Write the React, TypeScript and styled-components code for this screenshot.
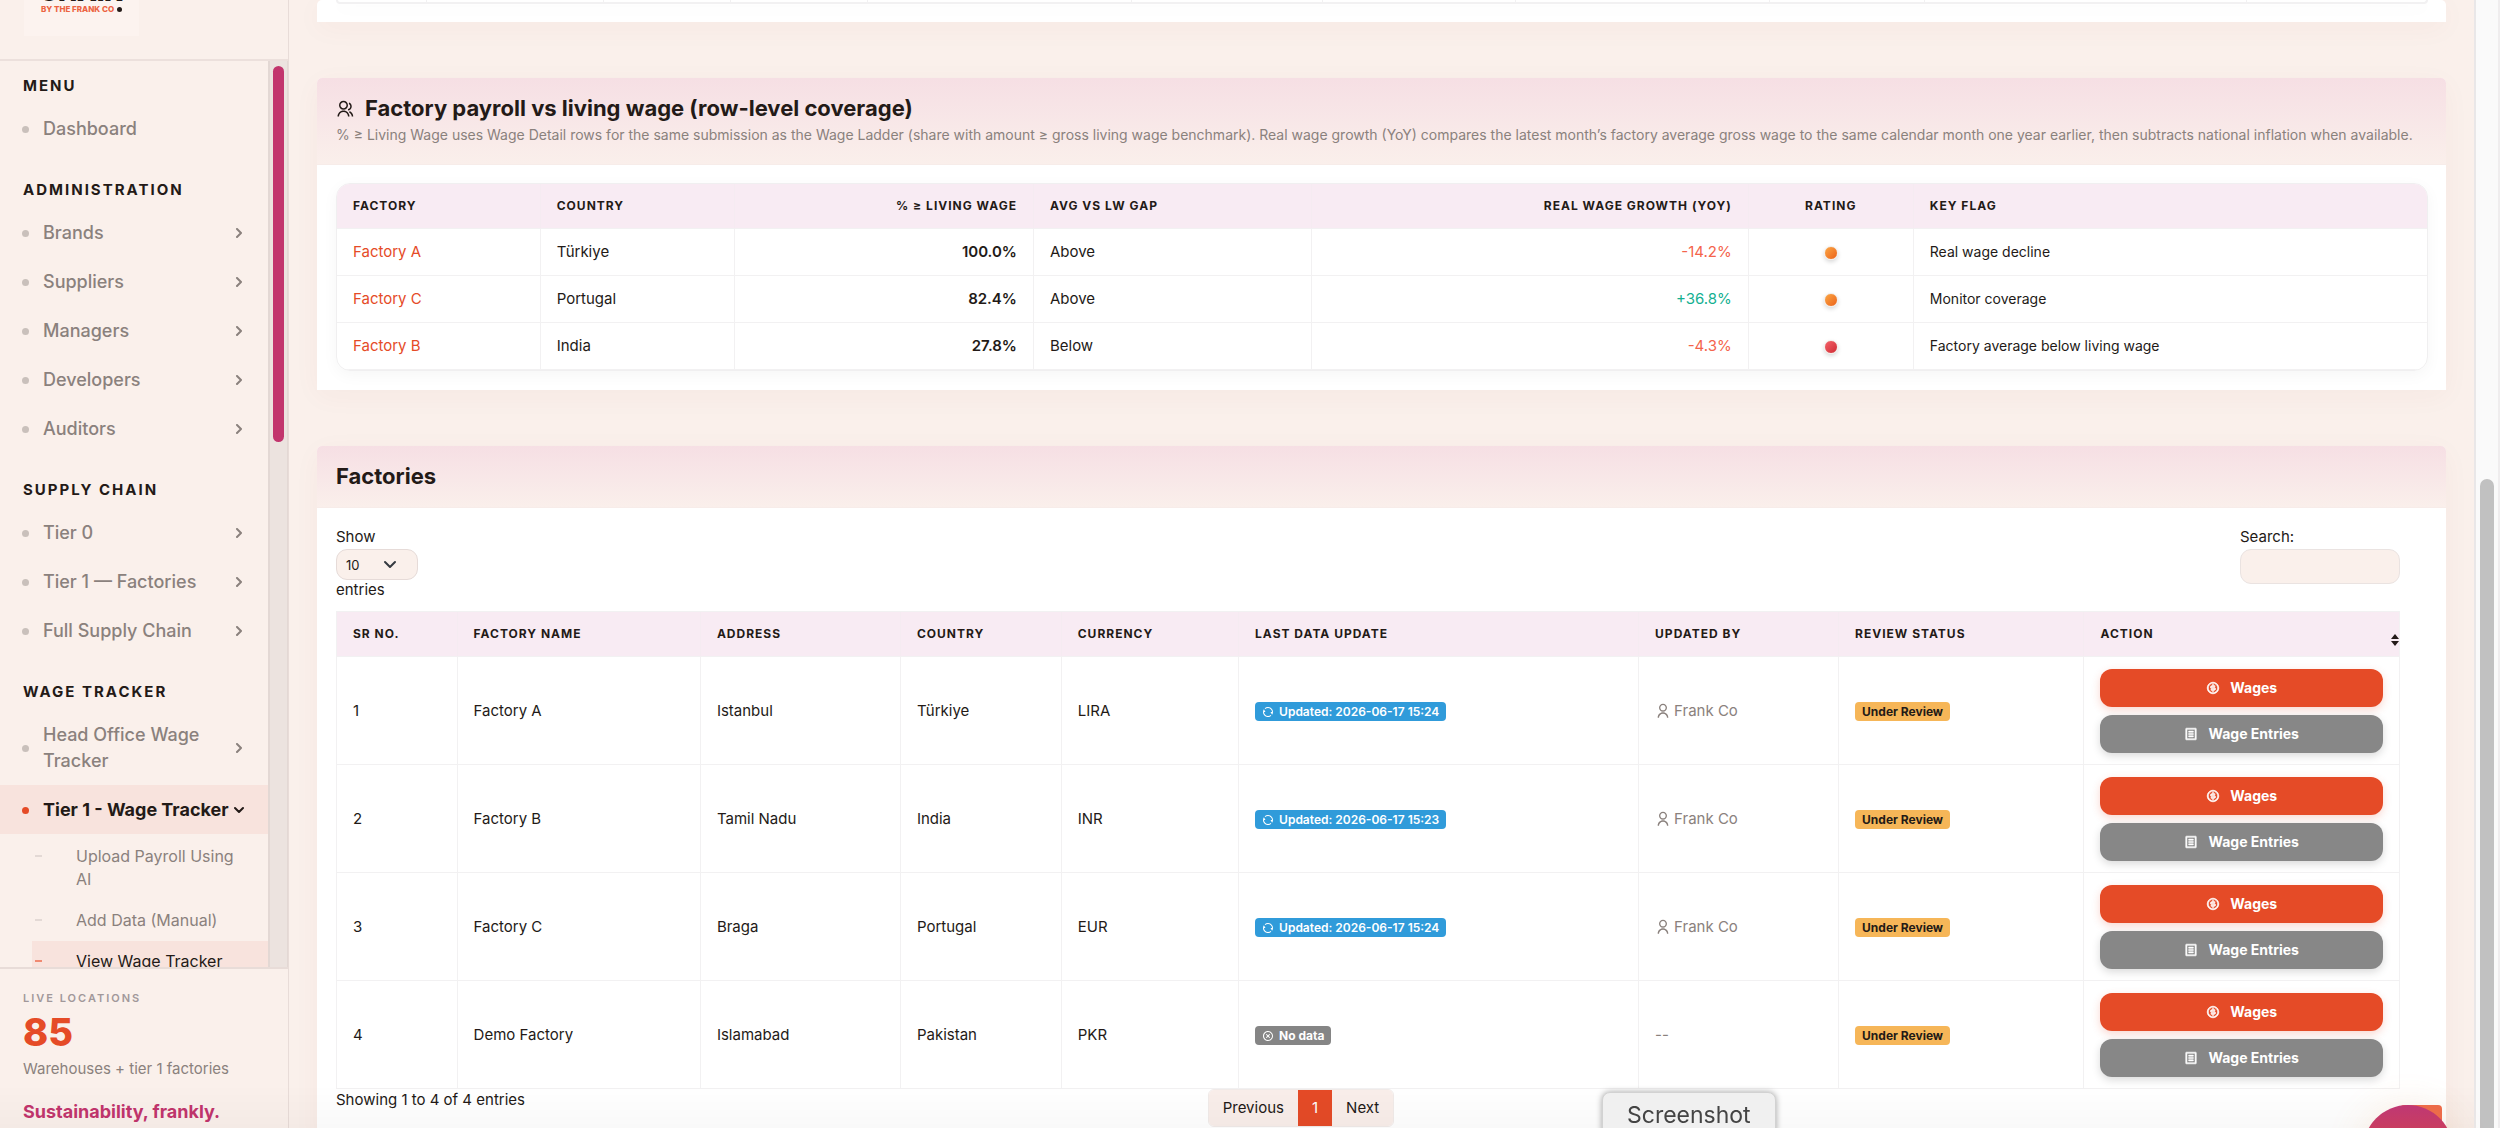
import React from 'react';
import styled, { createGlobalStyle, css } from 'styled-components';
import {
  RiGroupLine,
  RiUserLine,
  RiRefreshLine,
  RiCloseCircleLine,
  RiMoneyDollarCircleLine,
  RiFileListLine,
} from 'react-icons/ri';

const color = {
  page: '#faf0eb',
  ink: '#231a17',
  muted: '#8a817d',
  orange: '#e54b27',
  pink: '#c2356d',
  line: '#f2f1f2',
  head: '#f8ebf3',
  grey: '#878787',
};

const GlobalStyle = createGlobalStyle`
  *, *::before, *::after { box-sizing: border-box; }
  body {
    margin: 0;
    background: ${color.page};
    color: ${color.ink};
    font-family: Inter, "Noto Sans", sans-serif;
    font-size: 15px;
    line-height: 24px;
  }
  a { color: inherit; text-decoration: none; }
  h2, p, ul { margin: 0; padding: 0; }
  ul { list-style: none; }
  button, select, input { font: inherit; color: inherit; }
`;

const Shell = styled.div`
  display: flex;
  height: 100vh;
  overflow: hidden;
`;

/* Sidebar */

const Sidebar = styled.aside`
  display: flex;
  flex-direction: column;
  flex: 0 0 289px;
  border-right: 1px solid #e8dcd8;
`;

const LogoBar = styled.div`
  flex: 0 0 61px;
  padding-left: 24px;
  border-bottom: 2px solid #ece0dc;
`;

const LogoCard = styled.div`
  display: flex;
  flex-direction: column;
  align-items: center;
  width: 115px;
  height: 36px;
  background: #fcf3ef;
`;

const LogoName = styled.div`
  margin-top: -18px;
  font-size: 25px;
  font-weight: 900;
  line-height: 20px;
`;

const LogoBy = styled.div`
  display: flex;
  align-items: center;
  gap: 3px;
  margin-top: 2px;
  color: #ec6443;
  font-size: 8px;
  font-weight: 800;
  line-height: 10px;
  white-space: nowrap;

  &::after {
    content: '';
    width: 5px;
    height: 5px;
    border-radius: 50%;
    background: ${color.ink};
  }
`;

const NavArea = styled.div`
  display: flex;
  flex: 1;
  min-height: 0;
`;

const Nav = styled.nav`
  flex: 1;
  min-width: 0;
  overflow: hidden;
`;

const NavTrack = styled.div`
  flex: 0 0 19px;
  padding: 5px 3px;
  border-left: 2px solid #e3d8d4;
  border-right: 1px solid #e3d8d4;
  background: #ece3df;
`;

const NavThumb = styled.div`
  width: 11px;
  height: 42%;
  border-radius: 6px;
  background: ${color.pink};
`;

const NavHeading = styled.h2<{ $first?: boolean }>`
  padding: ${(p) => (p.$first ? '15px' : '27px')} 23px 8px;
  font-size: 15px;
  font-weight: 700;
  letter-spacing: 2px;
  line-height: 20px;
  text-transform: uppercase;
`;

const NavLink = styled.a<{ $active?: boolean }>`
  display: flex;
  align-items: center;
  padding: 12px 24px 11px 22px;
  color: ${color.muted};
  font-size: 18px;
  font-weight: 500;
  line-height: 26px;

  &::before {
    content: '';
    flex: none;
    width: 7px;
    height: 7px;
    margin-right: 14px;
    border-radius: 50%;
    background: #c9c0bb;
  }

  ${(p) =>
    p.$active &&
    css`
      background: #f8e3dd;
      color: ${color.ink};
      font-weight: 700;
      &::before { background: ${color.orange}; }
    `}
`;

const NavText = styled.span`
  flex: 1;
  min-width: 0;
`;

const SubList = styled.ul`
  padding: 2px 0 0 32px;
`;

const SubLink = styled.a<{ $active?: boolean }>`
  display: flex;
  padding: 9px 24px 9px 3px;
  color: ${color.muted};
  font-size: 16px;
  line-height: 23px;

  &::before {
    content: '';
    flex: none;
    width: 7px;
    height: 2px;
    margin: 10px 34px 0 0;
    background: #e3d9d5;
  }

  ${(p) =>
    p.$active &&
    css`
      background: #f8e3dd;
      color: ${color.ink};
      &::before { background: #f08a72; }
    `}
`;

const SideFooter = styled.div`
  flex: 0 0 161px;
  padding: 21px 23px 0;
  border-top: 2px solid #e8dcd8;
  white-space: nowrap;
`;

const FooterLabel = styled.p`
  color: #a1989a;
  font-size: 11px;
  font-weight: 600;
  letter-spacing: 2px;
  line-height: 16px;
`;

const FooterCount = styled.p`
  color: ${color.orange};
  font-size: 38px;
  font-weight: 800;
  line-height: 52px;
`;

const FooterNote = styled.p`
  color: ${color.muted};
  font-size: 15px;
  line-height: 22px;
`;

const FooterTag = styled.p`
  margin-top: 19px;
  color: ${color.pink};
  font-size: 18px;
  font-weight: 700;
  line-height: 26px;
`;

/* Content */

const Main = styled.main`
  display: flex;
  flex: 1;
  flex-direction: column;
  gap: 56px;
  min-width: 0;
  padding: 0 28px;
  overflow: hidden;
`;

const Card = styled.section`
  flex: none;
  border-radius: 5px 5px 0 0;
  background: #fff;
  box-shadow: 0 6px 28px rgba(150, 60, 50, 0.04);
`;

const CardHeader = styled.header<{ $tall?: boolean }>`
  padding: ${(p) => (p.$tall ? '15px 19px 18px' : '15px 19px 15px')};
  border-bottom: 1px solid #f7ece9;
  border-radius: 5px 5px 0 0;
  background: linear-gradient(#f6dfe4, #faefeb);
`;

const CardTitle = styled.h2`
  display: flex;
  align-items: center;
  gap: 11px;
  font-size: 22px;
  font-weight: 700;
  line-height: 31px;
`;

const CardNote = styled.p`
  color: ${color.muted};
  font-size: 14px;
  line-height: 22px;
`;

const CardBody = styled.div`
  padding: 18px 18px 19px 19px;
`;

const TailBody = styled.div`
  padding: 0 18px 18px 19px;
`;

const TailRow = styled.div`
  display: flex;
  height: 4px;
  border: solid ${color.line};
  border-width: 0 2px 2px;
  border-radius: 0 0 12px 12px;
  box-shadow: 0 4px 16px rgba(0, 0, 0, 0.04);
`;

const TailCell = styled.div<{ $grow: number }>`
  flex: ${(p) => p.$grow} 0 0;
  & + & { border-left: 1px solid ${color.line}; }
`;

const RoundedFrame = styled.div`
  overflow: hidden;
  border: 1px solid #f0eff0;
  border-radius: 14px;
  box-shadow: 0 4px 16px rgba(0, 0, 0, 0.04);
`;

const Table = styled.table<{ $boxed?: boolean }>`
  width: 100%;
  table-layout: fixed;
  border-collapse: separate;
  border-spacing: 0;
  ${(p) => p.$boxed && css`border: solid ${color.line}; border-width: 1px 1px 0;`}
`;

type Align = 'left' | 'right' | 'center';

const Th = styled.th<{ $align?: Align }>`
  height: 45px;
  padding: 12px 16px 12px;
  background: ${color.head};
  border-bottom: 1px solid ${color.line};
  font-size: 12px;
  font-weight: 700;
  letter-spacing: 1px;
  line-height: 20px;
  text-align: ${(p) => p.$align || 'left'};
  text-transform: uppercase;
  white-space: nowrap;

  & + & { border-left: 1px solid #f5ebf1; }
`;

const Td = styled.td<{ $align?: Align; $strong?: boolean; $small?: boolean }>`
  height: 47px;
  padding: 0 16px;
  border-bottom: 1px solid ${color.line};
  font-size: ${(p) => (p.$small ? '14px' : '15px')};
  font-weight: ${(p) => (p.$strong ? 600 : 400)};
  text-align: ${(p) => p.$align || 'left'};

  & + & { border-left: 1px solid ${color.line}; }
`;

const FactoryLink = styled.a`
  color: ${color.orange};
`;

const Growth = styled.span<{ $up: boolean }>`
  color: ${(p) => (p.$up ? '#14b091' : '#f4644c')};
`;

const Dot = styled.span<{ $tone: 'amber' | 'red' }>`
  display: inline-block;
  width: 14px;
  height: 14px;
  border: 1px solid #f3ece6;
  border-radius: 50%;
  vertical-align: middle;
  background: ${(p) =>
    p.$tone === 'amber'
      ? 'linear-gradient(135deg, #fba746, #ec6218)'
      : 'linear-gradient(135deg, #f4636a, #cf2a33)'};
  box-shadow: 0 2px 4px rgba(0, 0, 0, 0.16);
`;

/* Factories list */

const ListBody = styled.div`
  padding: 17px 46px 0 19px;
`;

const Tools = styled.div`
  display: flex;
  align-items: flex-start;
  justify-content: space-between;
  height: 86px;
`;

const ToolLabel = styled.label`
  display: flex;
  flex-direction: column;
  align-items: flex-start;
  line-height: 24px;
`;

const SelectBox = styled.span`
  position: relative;
  display: block;
  height: 31px;
  margin-bottom: -2px;

  svg {
    position: absolute;
    top: 10px;
    left: 47px;
    pointer-events: none;
  }
`;

const LengthSelect = styled.select`
  width: 82px;
  height: 31px;
  padding: 0 9px;
  appearance: none;
  border: 1px solid #e6dbd8;
  border-radius: 11px;
  background: ${color.page};
  font-size: 13px;
`;

const SearchInput = styled.input`
  width: 160px;
  height: 35px;
  padding: 0 12px;
  border: 1px solid #eae3e1;
  border-radius: 11px;
  background: ${color.page};
`;

const SortMark = styled.span`
  display: flex;
  float: right;
  margin: 10px -16px -10px 0;
`;

const TallTd = styled(Td)`
  height: 108px;
  padding: 12px 16px 11px;
`;

const Badge = styled.span<{ $tone: 'blue' | 'grey' | 'amber' }>`
  display: inline-flex;
  align-items: center;
  gap: 5px;
  height: 19px;
  padding: 0 7px;
  border-radius: 4px;
  background: ${(p) =>
    ({ blue: '#309bda', grey: '#858585', amber: '#f6b658' })[p.$tone]};
  color: ${(p) => (p.$tone === 'amber' ? color.ink : '#fff')};
  font-size: 12px;
  font-weight: ${(p) => (p.$tone === 'blue' ? 600 : 700)};
  line-height: 19px;
  vertical-align: middle;
  white-space: nowrap;
`;

const Person = styled.span`
  display: flex;
  align-items: center;
  gap: 3px;
  color: ${color.muted};
`;

const Actions = styled.div`
  display: flex;
  flex-direction: column;
  gap: 8px;
`;

const ActionButton = styled.button<{ $primary?: boolean }>`
  display: flex;
  align-items: center;
  justify-content: center;
  gap: 10px;
  height: 38px;
  border: 0;
  border-radius: 12px;
  background: ${(p) => (p.$primary ? color.orange : color.grey)};
  box-shadow: 0 3px 9px
    ${(p) => (p.$primary ? 'rgba(229, 75, 39, 0.22)' : 'rgba(0, 0, 0, 0.15)')};
  color: #fff;
  font-size: 14px;
  font-weight: 700;

  svg {
    stroke: currentColor;
    stroke-width: 1px;
  }
`;

const ListFooter = styled.div`
  display: grid;
  grid-template-columns: 13fr auto 15fr;
  height: 60px;
`;

const Summary = styled.p`
  line-height: 22px;
`;

const Pager = styled.div`
  display: flex;
  align-self: start;
  overflow: hidden;
  border: 1px solid #f1ebe9;
  border-radius: 6px;
`;

const PageButton = styled.button<{ $current?: boolean }>`
  padding: 0 14px;
  height: 36px;
  border: 0;
  background: ${(p) => (p.$current ? color.orange : '#f9eeea')};
  color: ${(p) => (p.$current ? '#fff' : color.ink)};
  font-size: 15px;
`;

/* Window furniture */

const PageTrack = styled.div`
  display: flex;
  flex: 0 0 26px;
  justify-content: center;
  align-items: flex-end;
  border-left: 2px solid #e9e7e8;
  border-right: 2px solid #efedee;
  background: #fafafa;
`;

const PageThumb = styled.div`
  width: 14px;
  height: calc(58% - 5px);
  border-radius: 7px 7px 0 0;
  background: #c1c1c1;
`;

const BottomShade = styled.div`
  position: fixed;
  right: 26px;
  bottom: 0;
  left: 0;
  height: 44px;
  background: linear-gradient(rgba(0, 0, 0, 0), rgba(0, 0, 0, 0.025));
  pointer-events: none;
`;

const ScreenTip = styled.div`
  position: fixed;
  bottom: -10px;
  left: 1602px;
  padding: 0 24px;
  border: 1px solid #d2d2d2;
  border-radius: 8px;
  background: #f0f0f0;
  box-shadow: 0 0 6px rgba(0, 0, 0, 0.35);
  color: #444;
  font-size: 23px;
  line-height: 44px;
`;

const TopButton = styled.button`
  position: fixed;
  right: 58px;
  bottom: -19px;
  width: 42px;
  height: 42px;
  border: 0;
  border-radius: 4px;
  background: #ed6a4a;
`;

const ChatButton = styled.button`
  position: fixed;
  right: 47px;
  bottom: -67px;
  width: 90px;
  height: 90px;
  border: 0;
  border-radius: 50%;
  background: linear-gradient(#bf3874, #e54b27);
  box-shadow: 0 4px 40px rgba(240, 150, 60, 0.16);
`;

function Chevron({ down }: { down?: boolean }) {
  return (
    <svg width="10" height="10" viewBox="0 0 10 10" fill="none" stroke="currentColor" strokeWidth="2" strokeLinecap="round" strokeLinejoin="round" aria-hidden="true">
      <path d={down ? 'M1 3l4 4 4-4' : 'M3 1l4 4-4 4'} />
    </svg>
  );
}

const sections = [
  { title: 'Menu', items: ['Dashboard'] },
  { title: 'Administration', items: ['Brands', 'Suppliers', 'Managers', 'Developers', 'Auditors'] },
  { title: 'Supply Chain', items: ['Tier 0', 'Tier 1 — Factories', 'Full Supply Chain'] },
  { title: 'Wage Tracker', items: ['Head Office Wage Tracker'] },
];

const coverage: {
  name: string;
  country: string;
  share: string;
  gap: string;
  growth: string;
  tone: 'amber' | 'red';
  flag: string;
}[] = [
  { name: 'Factory A', country: 'Türkiye', share: '100.0%', gap: 'Above', growth: '-14.2%', tone: 'amber', flag: 'Real wage decline' },
  { name: 'Factory C', country: 'Portugal', share: '82.4%', gap: 'Above', growth: '+36.8%', tone: 'amber', flag: 'Monitor coverage' },
  { name: 'Factory B', country: 'India', share: '27.8%', gap: 'Below', growth: '-4.3%', tone: 'red', flag: 'Factory average below living wage' },
];

const factories = [
  { name: 'Factory A', address: 'Istanbul', country: 'Türkiye', currency: 'LIRA', updated: '2026-06-17 15:24', by: 'Frank Co' },
  { name: 'Factory B', address: 'Tamil Nadu', country: 'India', currency: 'INR', updated: '2026-06-17 15:23', by: 'Frank Co' },
  { name: 'Factory C', address: 'Braga', country: 'Portugal', currency: 'EUR', updated: '2026-06-17 15:24', by: 'Frank Co' },
  { name: 'Demo Factory', address: 'Islamabad', country: 'Pakistan', currency: 'PKR', updated: '', by: '' },
];

const Col = styled.col<{ $share: number }>`
  width: ${(p) => p.$share}%;
`;

function SideMenu() {
  return (
    <Sidebar>
      <LogoBar>
        <LogoCard>
          <LogoName>CHAIN</LogoName>
          <LogoBy>BY THE FRANK CO</LogoBy>
        </LogoCard>
      </LogoBar>
      <NavArea>
        <Nav>
          {sections.map((section, i) => (
            <React.Fragment key={section.title}>
              <NavHeading $first={i === 0}>{section.title}</NavHeading>
              {section.items.map((item) => (
                <NavLink href="#" key={item}>
                  <NavText>{item}</NavText>
                  {i > 0 && <Chevron />}
                </NavLink>
              ))}
            </React.Fragment>
          ))}
          <NavLink href="#" $active>
            <NavText>Tier 1 - Wage Tracker</NavText>
            <Chevron down />
          </NavLink>
          <SubList>
            <li><SubLink href="#">Upload Payroll Using AI</SubLink></li>
            <li><SubLink href="#">Add Data (Manual)</SubLink></li>
            <li><SubLink href="#" $active>View Wage Tracker</SubLink></li>
          </SubList>
        </Nav>
        <NavTrack><NavThumb /></NavTrack>
      </NavArea>
      <SideFooter>
        <FooterLabel>LIVE LOCATIONS</FooterLabel>
        <FooterCount>85</FooterCount>
        <FooterNote>Warehouses + tier 1 factories</FooterNote>
        <FooterTag>Sustainability, frankly.</FooterTag>
      </SideFooter>
    </Sidebar>
  );
}

function CoverageCard() {
  return (
    <Card>
      <CardHeader $tall>
        <CardTitle>
          <RiGroupLine size={18} aria-hidden="true" />
          Factory payroll vs living wage (row-level coverage)
        </CardTitle>
        <CardNote>
          % ≥ Living Wage uses Wage Detail rows for the same submission as the Wage Ladder (share with amount ≥ gross living wage benchmark). Real wage growth (YoY) compares the latest month’s factory average gross wage to the same calendar month one year earlier, then subtracts national inflation when available.
        </CardNote>
      </CardHeader>
      <CardBody>
        <RoundedFrame>
          <Table>
            <colgroup>
              {[9.7, 9.3, 14.3, 13.3, 20.9, 7.9, 24.6].map((w, i) => <Col key={i} $share={w} />)}
            </colgroup>
            <thead>
              <tr>
                <Th>Factory</Th>
                <Th>Country</Th>
                <Th $align="right">% ≥ Living Wage</Th>
                <Th>Avg vs LW gap</Th>
                <Th $align="right">Real wage growth (YoY)</Th>
                <Th $align="center">Rating</Th>
                <Th>Key flag</Th>
              </tr>
            </thead>
            <tbody>
              {coverage.map((row) => (
                <tr key={row.name}>
                  <Td><FactoryLink href="#">{row.name}</FactoryLink></Td>
                  <Td>{row.country}</Td>
                  <Td $align="right" $strong>{row.share}</Td>
                  <Td>{row.gap}</Td>
                  <Td $align="right"><Growth $up={row.growth[0] === '+'}>{row.growth}</Growth></Td>
                  <Td $align="center"><Dot $tone={row.tone} /></Td>
                  <Td $small>{row.flag}</Td>
                </tr>
              ))}
            </tbody>
          </Table>
        </RoundedFrame>
      </CardBody>
    </Card>
  );
}

function FactoriesCard() {
  return (
    <Card>
      <CardHeader>
        <CardTitle>Factories</CardTitle>
      </CardHeader>
      <ListBody>
        <Tools>
          <ToolLabel>
            Show
            <SelectBox>
              <LengthSelect defaultValue="10">
                <option>10</option>
                <option>25</option>
                <option>50</option>
              </LengthSelect>
              <svg width="14" height="12" viewBox="0 0 14 12" fill="none" stroke="#343a40" strokeWidth="2" strokeLinecap="round" strokeLinejoin="round" aria-hidden="true">
                <path d="M2 3l5 5 5-5" />
              </svg>
            </SelectBox>
            entries
          </ToolLabel>
          <ToolLabel>
            Search:
            <SearchInput type="search" />
          </ToolLabel>
        </Tools>
        <Table $boxed>
          <colgroup>
            {[5.8, 11.8, 9.7, 7.8, 8.6, 19.4, 9.7, 11.9, 15.3].map((w, i) => <Col key={i} $share={w} />)}
          </colgroup>
          <thead>
            <tr>
              <Th>Sr No.</Th>
              <Th>Factory Name</Th>
              <Th>Address</Th>
              <Th>Country</Th>
              <Th>Currency</Th>
              <Th>Last Data Update</Th>
              <Th>Updated By</Th>
              <Th>Review Status</Th>
              <Th>
                Action
                <SortMark>
                  <svg width="8" height="12" viewBox="0 0 8 12" fill={color.ink} aria-hidden="true">
                    <path d="M4 0l4 5H0zM4 12l4-5H0z" />
                  </svg>
                </SortMark>
              </Th>
            </tr>
          </thead>
          <tbody>
            {factories.map((row, i) => (
              <tr key={row.name}>
                <TallTd>{i + 1}</TallTd>
                <TallTd>{row.name}</TallTd>
                <TallTd>{row.address}</TallTd>
                <TallTd>{row.country}</TallTd>
                <TallTd>{row.currency}</TallTd>
                <TallTd>
                  {row.updated ? (
                    <Badge $tone="blue"><RiRefreshLine size={12} aria-hidden="true" />Updated: {row.updated}</Badge>
                  ) : (
                    <Badge $tone="grey"><RiCloseCircleLine size={12} aria-hidden="true" />No data</Badge>
                  )}
                </TallTd>
                <TallTd>
                  <Person>{row.by ? <><RiUserLine size={16} aria-hidden="true" />{row.by}</> : '--'}</Person>
                </TallTd>
                <TallTd><Badge $tone="amber">Under Review</Badge></TallTd>
                <TallTd>
                  <Actions>
                    <ActionButton type="button" $primary><RiMoneyDollarCircleLine size={14} aria-hidden="true" />Wages</ActionButton>
                    <ActionButton type="button"><RiFileListLine size={14} aria-hidden="true" />Wage Entries</ActionButton>
                  </Actions>
                </TallTd>
              </tr>
            ))}
          </tbody>
        </Table>
        <ListFooter>
          <Summary>Showing 1 to 4 of 4 entries</Summary>
          <Pager>
            <PageButton type="button">Previous</PageButton>
            <PageButton type="button" $current>1</PageButton>
            <PageButton type="button">Next</PageButton>
          </Pager>
        </ListFooter>
      </ListBody>
    </Card>
  );
}

export default function App() {
  return (
    <>
      <GlobalStyle />
      <Shell>
        <SideMenu />
        <Main>
          <Card>
            <TailBody>
              <TailRow>
                {[88, 178, 126, 137, 265, 191, 193, 254, 155, 323, 180].map((g, i) => <TailCell key={i} $grow={g} />)}
              </TailRow>
            </TailBody>
          </Card>
          <CoverageCard />
          <FactoriesCard />
        </Main>
        <PageTrack><PageThumb /></PageTrack>
      </Shell>
      <BottomShade />
      <TopButton type="button" aria-label="Back to top" />
      <ChatButton type="button" aria-label="Open chat" />
      <ScreenTip>Screenshot</ScreenTip>
    </>
  );
}
